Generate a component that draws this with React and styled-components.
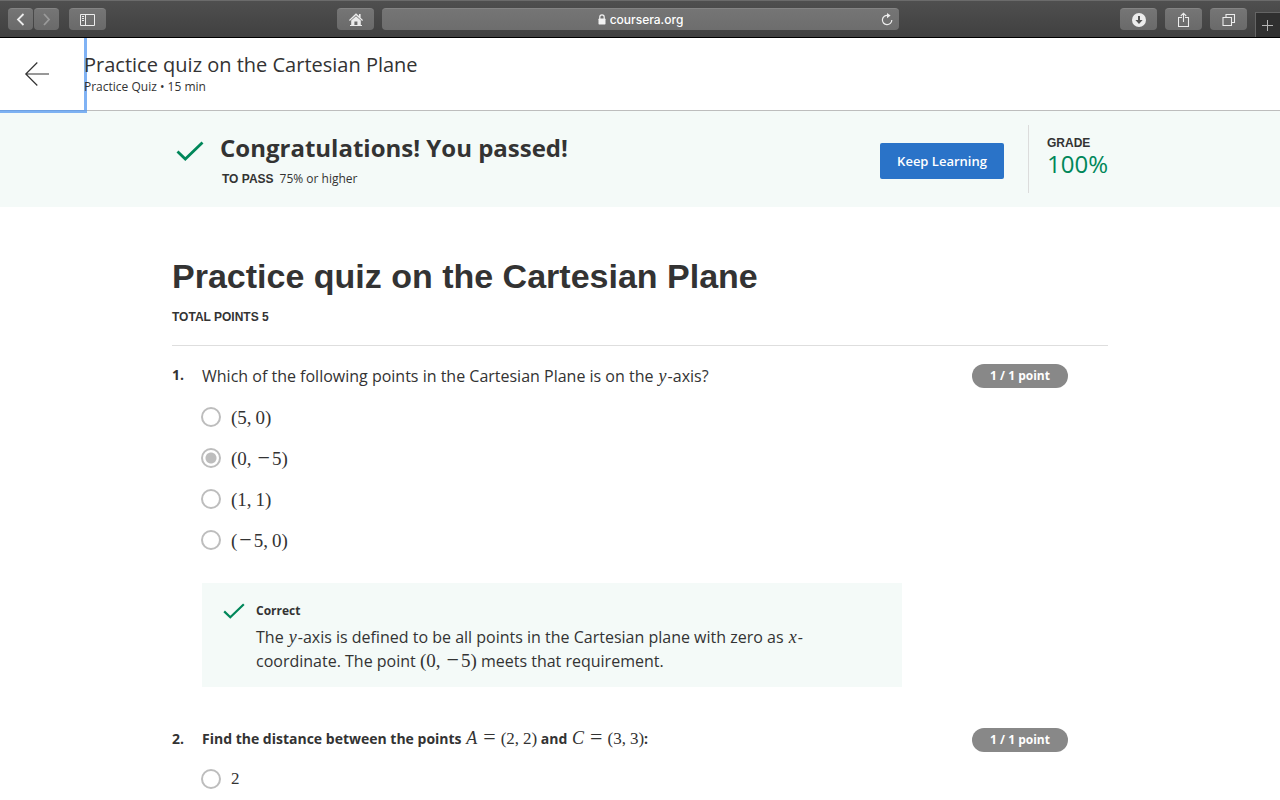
import React from "react";
import styled, { createGlobalStyle } from "styled-components";

const sans = `"Open Sans", sans-serif`;
const arial = `"Liberation Sans", Arial, sans-serif`;
const green = "#00875a";
const mint = "#f4faf8";

const GlobalStyle = createGlobalStyle`
  *, *::before, *::after { box-sizing: border-box; }
  body { margin: 0; background: #fff; color: #333; font-family: ${sans}; }
  h1, h2, h3, p, fieldset, ul { margin: 0; padding: 0; border: 0; }
`;

/* Browser toolbar */
const Toolbar = styled.div`
  position: relative;
  z-index: 1;
  display: grid;
  grid-template-columns: minmax(0, 337fr) minmax(0, 562fr) minmax(0, 381fr);
  height: 38px;
  background: linear-gradient(#4f4f4f, #404040);
  border-top: 1px solid #6b6b6b;
  border-bottom: 1px solid #000;
`;

const ToolGroup = styled.div`
  display: flex;
  align-items: center;
  justify-content: ${(p) => p.$justify || "flex-start"};
  gap: ${(p) => p.$gap || 8}px;
  padding-left: ${(p) => p.$inset || 0}px;
`;

const ToolButton = styled.button`
  display: grid;
  place-items: center;
  flex: none;
  width: ${(p) => (p.$narrow ? 25 : 37)}px;
  height: 22px;
  padding: 0;
  border: 0;
  border-top: 1px solid #848484;
  border-radius: 4px;
  background: linear-gradient(#757575, #6a6a6a);
  color: ${(p) => (p.$dim ? "#9a9a9a" : "#ececec")};
`;

const PairedButtons = styled.div`
  display: flex;
  gap: 1px;
`;

const AddressBar = styled.div`
  display: grid;
  grid-template-columns: 24px minmax(0, 1fr) 24px;
  align-items: center;
  flex: 1;
  height: 22px;
  border-top: 1px solid #848484;
  border-radius: 4px;
  background: linear-gradient(#757575, #6d6d6d);
  color: #f2f2f2;
`;

const Address = styled.label`
  grid-column: 2;
  display: flex;
  align-items: center;
  justify-content: center;
  gap: 4px;
`;

const AddressInput = styled.input`
  field-sizing: content;
  padding: 0;
  border: 0;
  outline: 0;
  background: transparent;
  color: #fff;
  font: 500 12px/16px Inter, sans-serif;
`;

const ReloadButton = styled.button`
  display: grid;
  place-items: center;
  padding: 0;
  border: 0;
  background: transparent;
  color: #ececec;
`;

const NewTab = styled.button`
  align-self: flex-end;
  display: grid;
  place-items: center;
  width: 25px;
  height: 25px;
  padding: 0;
  border: solid #656565;
  border-width: 1px 0 0 1px;
  background: #303030;
  color: #b5b5b5;
`;

/* Course item header */
const ItemHeader = styled.header`
  display: flex;
  height: 73px;
  border-bottom: 1px solid #bdbdbd;
`;

const BackLink = styled.a`
  display: flex;
  align-items: center;
  flex: none;
  width: 84px;
  padding-left: 24px;
  color: #333;
  outline: 3px solid rgba(79, 148, 240, 0.72);
`;

const ItemHeading = styled.div`
  display: flex;
  flex-direction: column;
  justify-content: center;
  padding-top: 2px;
`;

const ItemTitle = styled.h2`
  font-size: 20px;
  font-weight: 400;
  line-height: 24px;
`;

const ItemMeta = styled.p`
  font-size: 12px;
  line-height: 20px;
`;

/* Result banner */
const Banner = styled.section`
  height: 96px;
  background: ${mint};
`;

const Container = styled.div`
  max-width: 936px;
  margin: 0 auto;
`;

const BannerRow = styled(Container)`
  display: flex;
  align-items: flex-start;
  padding: 14px 0;
`;

const BannerCheck = styled.div`
  flex: none;
  width: 48px;
  padding: 16px 0 0 4px;
`;

const BannerText = styled.div`
  flex: 1;
  padding-top: 8px;
`;

const BannerTitle = styled.h2`
  font-size: 24px;
  font-weight: 700;
  line-height: 30px;
`;

const PassMark = styled.p`
  padding: 6px 0 0 2px;
  font-size: 12px;
  line-height: 20px;
`;

const Caps = styled.span`
  margin-right: 6px;
  font: 700 12px/20px ${arial};
`;

const PrimaryButton = styled.button`
  height: 36px;
  margin: 18px 24px 0 0;
  padding: 0 16px;
  border: 0;
  border-radius: 2px;
  background: #2a73c8;
  color: #fff;
  font: 600 13px/20px ${sans};
  white-space: nowrap;
  min-width: 124px;
`;

const Grade = styled.div`
  display: flex;
  flex-direction: column;
  width: 80px;
  height: 68px;
  padding: 8px 0 0 18px;
  border-left: 1px solid #dcdcdc;
`;

const GradeValue = styled.span`
  color: ${green};
  font-size: 24px;
  line-height: 22px;
`;

/* Quiz */
const QuizHead = styled.div`
  padding: 48px 0 18px;
  border-bottom: 1px solid #dedede;
`;

const QuizTitle = styled.h1`
  font: 700 34px/42px ${arial};
`;

const TotalPoints = styled.p`
  padding-top: 10px;
  font: 700 12px/20px ${arial};
`;

const Question = styled.section`
  display: grid;
  grid-template-columns: 30px minmax(0, 1fr) 96px 40px;
  padding-top: ${(p) => p.$top}px;
`;

const Number = styled.span`
  font-size: 14px;
  font-weight: 700;
  line-height: 22px;
`;

const Prompt = styled.h3`
  font-size: ${(p) => (p.$bold ? 14 : 16)}px;
  font-weight: ${(p) => (p.$bold ? 700 : 400)};
  line-height: ${(p) => (p.$bold ? 22 : 24)}px;
`;

const Points = styled.span`
  height: 24px;
  border-radius: 12px;
  background: #888;
  color: #fff;
  font-size: 12px;
  font-weight: 700;
  line-height: 24px;
  text-align: center;
`;

const Options = styled.fieldset`
  grid-column: 2;
  min-width: 0;
  padding-top: ${(p) => p.$top}px;
`;

const Option = styled.label`
  display: flex;
  align-items: center;
  gap: 10px;
  height: 41px;
  margin-left: -1px;
`;

const Radio = styled.input`
  appearance: none;
  flex: none;
  width: 20px;
  height: 20px;
  margin: 0;
  border: 2px solid #bdbdbd;
  border-radius: 50%;
  background: ${(p) =>
    p.defaultChecked
      ? "radial-gradient(circle, #bdbdbd 5px, transparent 6px)"
      : "transparent"};
`;

const Math = styled.span`
  font: 400 ${(p) => (p.$small ? 17 : 19)}px/22px "Liberation Serif", "Times New Roman", serif;
  white-space: nowrap;
`;

const Variable = styled.i`
  padding: 0 1px;
  font: italic 400 18px/20px "Liberation Serif", "Times New Roman", serif;
`;

const Comma = styled.span`
  padding-right: 4px;
`;

const OptionText = styled.span`
  padding-top: 2px;
`;

const Minus = styled.span`
  padding: 0 2px;
  font-size: 22px;
  line-height: 0;
`;

const Equals = styled.span`
  padding: 0 5px;
  font-size: 22px;
  line-height: 0;
`;

const CorrectBox = styled.div`
  grid-column: 2;
  display: grid;
  grid-template-columns: 33px minmax(0, 1fr);
  max-width: 700px;
  margin-top: 23px;
  padding: 19px 20px 14px 21px;
  background: ${mint};
`;

const FeedbackTitle = styled.h3`
  font-size: 12px;
  font-weight: 700;
  line-height: 18px;
`;

const FeedbackText = styled.p`
  grid-column: 2;
  padding-top: 5px;
  font-size: 16px;
  line-height: 24px;
`;

const ChevronIcon = ({ right }) => (
  <svg width="10" height="14" viewBox="0 0 10 14" fill="none" stroke="currentColor" strokeWidth="1.8">
    <path d={right ? "M2 1 7 6.5 2 12" : "M7.5 1 2 6.5 7.5 12"} />
  </svg>
);

const SidebarIcon = () => (
  <svg width="16" height="12" viewBox="0 0 16 12" fill="none" stroke="currentColor">
    <path d="M.5 .5h14v11H.5zM5.5 .5v11M2 2.5h2M2 4.5h2M2 6.5h2" />
  </svg>
);

const HomeIcon = () => (
  <svg width="14" height="14" viewBox="0 0 14 14" fill="currentColor">
    <path d="M7 .3 10 3.1V1h1.6v3.7L14 7l-.8.9L7 2.3.8 7.9 0 7z" />
    <path fillRule="evenodd" d="M7 3.3 11.8 7.6V12H13v1H1v-1h1.2V7.6zM5.4 8.4V12h3V8.4z" />
  </svg>
);

const LockIcon = () => (
  <svg width="8" height="11" viewBox="0 0 8 11">
    <path d="M1.8 5V3a2.2 2.2 0 0 1 4.4 0v2" fill="none" stroke="currentColor" strokeWidth="1.2" />
    <rect x=".5" y="4.6" width="7" height="5.9" rx=".7" fill="currentColor" />
  </svg>
);

const ReloadIcon = () => (
  <svg width="12" height="14" viewBox="0 0 12 14" fill="none" stroke="currentColor" strokeWidth="1.2">
    <path d="M7 2.4A4.7 4.7 0 1 0 10.8 7" />
    <path d="M6 0 9.6 2.6 6 5.2z" fill="currentColor" stroke="none" />
  </svg>
);

const DownloadIcon = () => (
  <svg width="14" height="14" viewBox="0 0 14 14">
    <circle cx="7" cy="7" r="7" fill="currentColor" />
    <path d="M6 3h2v4h2.6L7 11 3.4 7H6z" fill="#555" />
  </svg>
);

const ShareIcon = () => (
  <svg width="12" height="16" viewBox="0 0 12 16" fill="none" stroke="currentColor" strokeWidth="1.1">
    <path d="M4 5.5H.5v9h10v-9H7M5.5 10V1.3M2.8 4 5.5 1.2 8.2 4" />
  </svg>
);

const TabsIcon = () => (
  <svg width="14" height="14" viewBox="0 0 14 14" fill="none" stroke="currentColor" strokeWidth="1.1">
    <path d="M1 4.5h8.5V12.5H1zM4 4.5v-3h8.5V9.5h-3" />
  </svg>
);

const PlusIcon = () => (
  <svg width="12" height="12" viewBox="0 0 12 12" stroke="currentColor">
    <path d="M5.5 1v11M0 6.5h11" />
  </svg>
);

const ArrowIcon = () => (
  <svg width="26" height="26" viewBox="0 0 26 26" fill="none" stroke="currentColor" strokeWidth="1.2">
    <path d="M25 13H2M13.3 1.5 1.8 13l11.5 11.5" />
  </svg>
);

const CheckIcon = ({ width, height }) => (
  <svg width={width} height={height} viewBox="0 0 28 20" fill="none" stroke={green} strokeWidth="2.8">
    <path d="M1.5 10.5 9.3 18 26.5 1.5" />
  </svg>
);

const Term = ({ value }) =>
  value < 0 ? (
    <>
      <Minus>−</Minus>
      {-value}
    </>
  ) : (
    value
  );

/* A coordinate pair, with the thin gap that mathematics sets after a comma */
const Pair = ({ x, y, small }) => (
  <Math $small={small}>
    (<Term value={x} />
    <Comma>,</Comma>
    <Term value={y} />)
  </Math>
);

const Point = ({ name, x, y }) => (
  <>
    <Variable>{name}</Variable>
    <Math $small>
      <Equals>=</Equals>
    </Math>
    <Pair small x={x} y={y} />
  </>
);

const answers = [
  [5, 0],
  [0, -5],
  [1, 1],
  [-5, 0],
];

export default function App() {
  return (
    <>
      <GlobalStyle />
      <Toolbar>
        <ToolGroup $inset={8} $gap={10}>
          <PairedButtons>
            <ToolButton $narrow aria-label="Back"><ChevronIcon /></ToolButton>
            <ToolButton $narrow $dim aria-label="Forward"><ChevronIcon right /></ToolButton>
          </PairedButtons>
          <ToolButton aria-label="Sidebar"><SidebarIcon /></ToolButton>
        </ToolGroup>
        <ToolGroup>
          <ToolButton aria-label="Home"><HomeIcon /></ToolButton>
          <AddressBar>
            <Address>
              <LockIcon />
              <AddressInput aria-label="Address" defaultValue="coursera.org" />
            </Address>
            <ReloadButton aria-label="Reload"><ReloadIcon /></ReloadButton>
          </AddressBar>
        </ToolGroup>
        <ToolGroup $justify="flex-end">
          <ToolButton aria-label="Downloads"><DownloadIcon /></ToolButton>
          <ToolButton aria-label="Share"><ShareIcon /></ToolButton>
          <ToolButton aria-label="Tabs"><TabsIcon /></ToolButton>
          <NewTab aria-label="New tab"><PlusIcon /></NewTab>
        </ToolGroup>
      </Toolbar>

      <ItemHeader>
        <BackLink href="#" aria-label="Back to course"><ArrowIcon /></BackLink>
        <ItemHeading>
          <ItemTitle>Practice quiz on the Cartesian Plane</ItemTitle>
          <ItemMeta>Practice Quiz • 15 min</ItemMeta>
        </ItemHeading>
      </ItemHeader>

      <Banner>
        <BannerRow>
          <BannerCheck><CheckIcon width={28} height={20} /></BannerCheck>
          <BannerText>
            <BannerTitle>Congratulations! You passed!</BannerTitle>
            <PassMark><Caps>TO PASS</Caps>75% or higher</PassMark>
          </BannerText>
          <PrimaryButton>Keep Learning</PrimaryButton>
          <Grade>
            <Caps>GRADE</Caps>
            <GradeValue>100%</GradeValue>
          </Grade>
        </BannerRow>
      </Banner>

      <Container as="main">
        <QuizHead>
          <QuizTitle>Practice quiz on the Cartesian Plane</QuizTitle>
          <TotalPoints>TOTAL POINTS 5</TotalPoints>
        </QuizHead>

        <Question $top={18}>
          <Number>1.</Number>
          <Prompt>
            Which of the following points in the Cartesian Plane is on the <Variable>y</Variable>-axis?
          </Prompt>
          <Points>1 / 1 point</Points>
          <Options $top={8} aria-label="Question 1">
            {answers.map(([x, y], i) => (
              <Option key={i}>
                <Radio type="radio" name="q1" defaultChecked={i === 1} />
                <OptionText>
                  <Pair x={x} y={y} />
                </OptionText>
              </Option>
            ))}
          </Options>
          <CorrectBox>
            <CheckIcon width={22} height={18} />
            <FeedbackTitle>Correct</FeedbackTitle>
            <FeedbackText>
              The <Variable>y</Variable>-axis is defined to be all points in the Cartesian plane with
              zero as <Variable>x</Variable>-coordinate. The point <Pair x={0} y={-5} /> meets that
              requirement.
            </FeedbackText>
          </CorrectBox>
        </Question>

        <Question $top={41}>
          <Number>2.</Number>
          <Prompt $bold>
            Find the distance between the points <Point name="A" x={2} y={2} /> and{" "}
            <Point name="C" x={3} y={3} />:
          </Prompt>
          <Points>1 / 1 point</Points>
          <Options $top={6} aria-label="Question 2">
            <Option>
              <Radio type="radio" name="q2" />
              <Math $small>2</Math>
            </Option>
          </Options>
        </Question>
      </Container>
    </>
  );
}
